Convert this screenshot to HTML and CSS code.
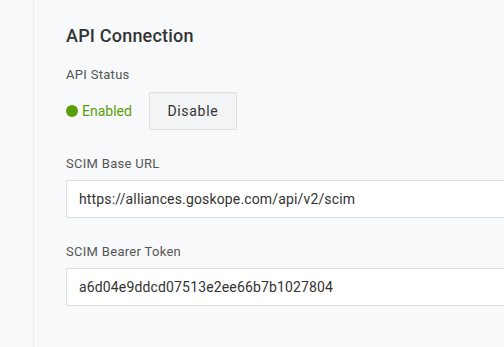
FILE: index.html
```html
<!DOCTYPE html>
<html>
<head>
<meta charset="utf-8">
<link rel="stylesheet" href="styles.css">
</head>
<body>
<div class="page">
  <aside class="side"></aside>
  <main class="main">
    <h2 class="title">API Connection</h2>
    <div class="label status-label">API Status</div>
    <div class="status-row">
      <span class="status"><span class="dot"></span>Enabled</span>
      <button class="btn">Disable</button>
    </div>
    <div class="label">SCIM Base URL</div>
    <div class="field">https://alliances.goskope.com/api/v2/scim</div>
    <div class="label">SCIM Bearer Token</div>
    <div class="field">a6d04e9ddcd07513e2ee66b7b1027804</div>
  </main>
</div>
</body>
</html>
```
FILE: styles.css
```css
html, body {
  margin: 0;
  padding: 0;
  background: #f8f9fa;
  font-family: Roboto, "Liberation Sans", sans-serif;
}
.page {
  display: flex;
  width: 504px;
  height: 347px;
  overflow: hidden;
}
.side {
  width: 33px;
  flex: none;
  border-right: 1px solid #ebedef;
}
.main {
  flex: none;
  width: 600px;
  padding: 24px 0 0 32px;
  box-sizing: border-box;
}
.title {
  margin: 0;
  font-size: 18px;
  line-height: 24px;
  font-weight: 500;
  letter-spacing: 0.2px;
  color: #333;
}
.label {
  font-size: 13px;
  line-height: 17px;
  letter-spacing: 0.3px;
  color: #555;
  margin: 25px 0 8px;
}
.status-label {
  margin: 18px 0 9px;
}
.status-row {
  display: flex;
  align-items: center;
  gap: 17px;
}
.status {
  display: flex;
  align-items: center;
  gap: 4px;
  font-size: 14px;
  color: #5a9e0a;
}
.dot {
  width: 12px;
  height: 12px;
  border-radius: 50%;
  background: #5a9e0a;
}
.btn {
  width: 88px;
  height: 38px;
  border: 1px solid #dcdedf;
  border-radius: 2px;
  background: #f3f4f5;
  font-family: Roboto, "Liberation Sans", sans-serif;
  font-size: 14px;
  letter-spacing: 0.7px;
  color: #333;
  padding: 0;
}
.field {
  width: 520px;
  height: 38px;
  box-sizing: border-box;
  border: 1px solid #dcdedf;
  border-radius: 2px;
  background: #fff;
  padding: 0 12px;
  font-size: 14px;
  line-height: 36px;
  letter-spacing: 0.15px;
  color: #333;
}
```
